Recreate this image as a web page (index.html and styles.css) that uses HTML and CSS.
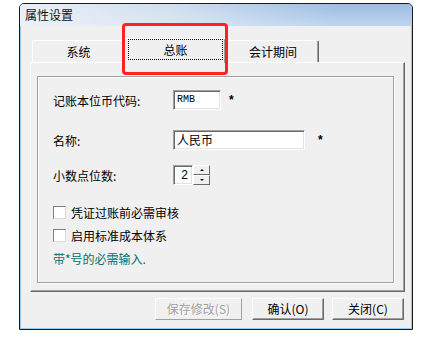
FILE: index.html
```html
<!DOCTYPE html>
<html lang="zh-CN">
<head>
    <meta charset="UTF-8">
    <title>属性设置</title>
    <link rel="stylesheet" href="styles.css">
</head>
<body>
    <div class="window">
        <div class="titlebar">属性设置</div>
        <div class="client">
            <div class="tabs">
                <div class="tab tab-sys">系统</div>
                <div class="tab active"><span class="focus">总账</span></div>
                <div class="tab tab-period">会计期间</div>
            </div>
            <div class="panel">
                <div class="group">
                    <div class="row row-code">
                        <span class="label">记账本位币代码:</span>
                        <div class="field field-code">RMB</div>
                        <span class="req">*</span>
                    </div>
                    <div class="row row-name">
                        <span class="label">名称:</span>
                        <div class="field field-name">人民币</div>
                        <span class="req req-name">*</span>
                    </div>
                    <div class="row row-dec">
                        <span class="label">小数点位数:</span>
                        <div class="field field-dec">2</div>
                        <div class="spin">
                            <div class="spin-btn"><span class="arrow up"></span></div>
                            <div class="spin-btn"><span class="arrow down"></span></div>
                        </div>
                    </div>
                    <div class="check-row first">
                        <span class="checkbox"></span>
                        <span>凭证过账前必需审核</span>
                    </div>
                    <div class="check-row">
                        <span class="checkbox"></span>
                        <span>启用标准成本体系</span>
                    </div>
                    <div class="check-row note">带*号的必需输入.</div>
                </div>
            </div>
            <div class="buttons">
                <div class="btn btn-save disabled">保存修改(S)</div>
                <div class="btn">确认(O)</div>
                <div class="btn">关闭(C)</div>
            </div>
        </div>
        <!-- red marker drawn over the active tab -->
        <div class="highlight"></div>
    </div>
</body>
</html>
```

FILE: styles.css
```css
body {
    margin: 0;
    background: #fff;
    font-family: "Noto Sans CJK SC", "Liberation Sans", sans-serif;
    font-size: 12px;
    color: #000;
}

.window {
    position: relative;
    box-sizing: border-box;
    width: 394px;
    height: 327px;
    margin: 3px 0 0 19px;
    border: 1px solid #1a1a1a;
    border-radius: 5px 5px 0 0;
    padding: 0 1px 1px 1px;
    background: #96cdee;
    display: flex;
    flex-direction: column;
}

.titlebar {
    height: 22px;
    margin: 0 -1px;
    padding-left: 5px;
    line-height: 22px;
    border-radius: 4px 4px 0 0;
    background:
        linear-gradient(to right, rgba(238, 242, 247, 0.95) 0%, rgba(238, 242, 247, 0.6) 40%, rgba(238, 242, 247, 0) 80%),
        linear-gradient(#9ebde2, #bfd5ee);
    color: #111;
}

.client {
    flex: 1;
    background: #f0f0f0;
    padding: 12px 0 0 9px;
    display: flex;
    flex-direction: column;
}

/* tabs */
.tabs {
    display: flex;
    align-items: flex-end;
    height: 24px;
    margin-left: 2px;
    position: relative;
    z-index: 1;
}

.tab {
    box-sizing: border-box;
    height: 22px;
    line-height: 21px;
    text-align: center;
    border-top: 1px solid #fff;
    border-left: 1px solid #fff;
    border-right: 1px solid #696969;
    box-shadow: inset -1px 0 0 #a0a0a0;
    border-radius: 2px 2px 0 0;
    background: #f0f0f0;
}

.tab-sys {
    width: 92px;
    border-right: none;
    box-shadow: none;
}

.tab-period {
    width: 92px;
    margin-left: 1px;
}

.tab.active {
    width: 102px;
    height: 25px;
    margin-bottom: -1px;
    padding: 0 2px 1px 3px;
    line-height: 21px;
}

.focus {
    display: block;
    height: 21px;
    border: 1px dotted #000;
    box-sizing: border-box;
    line-height: 19px;
}

/* tab page */
.panel {
    box-sizing: border-box;
    width: 375px;
    height: 230px;
    border-top: 1px solid #fff;
    border-left: 1px solid #fff;
    border-right: 1px solid #696969;
    border-bottom: 1px solid #696969;
    box-shadow: inset -1px -1px 0 #a0a0a0;
    padding: 13px 0 0 6px;
}

.group {
    box-sizing: border-box;
    width: 357px;
    height: 207px;
    border: 1px solid #a0a0a0;
    box-shadow: 1px 1px 0 #fff, inset 1px 1px 0 #fff;
    padding: 13px 0 0 15px;
}

.row {
    display: flex;
    align-items: center;
    height: 20px;
}

.row-name {
    margin-top: 20px;
}

.row-dec {
    margin-top: 15px;
}

.label {
    width: 120px;
}

.field {
    box-sizing: border-box;
    height: 20px;
    background: #fff;
    border-top: 1px solid #a0a0a0;
    border-left: 1px solid #a0a0a0;
    border-right: 1px solid #fff;
    border-bottom: 1px solid #fff;
    box-shadow: inset 1px 1px 0 #696969, inset -1px -1px 0 #e3e3e3;
    padding-left: 3px;
    line-height: 18px;
}

.field-code {
    width: 48px;
    font-family: "Liberation Mono", monospace;
    font-size: 10px;
}

.field-name {
    width: 132px;
}

.field-dec {
    width: 20px;
    padding: 0 4px 0 0;
    text-align: right;
    font-family: "Liberation Sans", sans-serif;
}

.req {
    margin-left: 8px;
    font-family: "Liberation Sans", sans-serif;
    font-weight: bold;
}

.req-name {
    margin-left: 13px;
}

.spin {
    display: flex;
    flex-direction: column;
    width: 17px;
    height: 20px;
}

.spin-btn {
    box-sizing: border-box;
    flex: 1;
    border-top: 1px solid #fff;
    border-left: 1px solid #fff;
    border-right: 1px solid #696969;
    border-bottom: 1px solid #696969;
    background: #f0f0f0;
    display: flex;
    align-items: center;
    justify-content: center;
}

.arrow {
    width: 0;
    height: 0;
    border-left: 2px solid transparent;
    border-right: 2px solid transparent;
}

.arrow.up {
    border-bottom: 2px solid #000;
}

.arrow.down {
    border-top: 2px solid #000;
}

/* check boxes */
.check-row {
    display: flex;
    align-items: center;
    height: 23px;
}

.check-row.first {
    margin-top: 16px;
}

.checkbox {
    box-sizing: border-box;
    width: 13px;
    height: 13px;
    margin-right: 5px;
    background: #fff;
    border-top: 1px solid #808080;
    border-left: 1px solid #808080;
    border-right: 1px solid #dcdcdc;
    border-bottom: 1px solid #dcdcdc;
}

.note {
    color: #007373;
}

/* buttons */
.buttons {
    display: flex;
    justify-content: flex-end;
    gap: 8px;
    margin-top: 6px;
    padding-right: 7px;
}

.btn {
    box-sizing: border-box;
    width: 72px;
    height: 22px;
    line-height: 19px;
    text-align: center;
    border-top: 1px solid #fff;
    border-left: 1px solid #fff;
    border-right: 1px solid #696969;
    border-bottom: 1px solid #696969;
    box-shadow: inset -1px -1px 0 #a0a0a0;
}

.btn-save {
    width: 87px;
    margin-right: 2px;
}

.btn.disabled {
    color: #a0a0a0;
    text-shadow: 1px 1px 0 #fff;
    border-right-color: #a0a0a0;
    border-bottom-color: #a0a0a0;
    box-shadow: none;
}

.highlight {
    position: absolute;
    left: 102px;
    top: 19px;
    width: 100px;
    height: 46px;
    border: 3px solid #ff2222;
    border-radius: 4px;
    z-index: 2;
}
```
